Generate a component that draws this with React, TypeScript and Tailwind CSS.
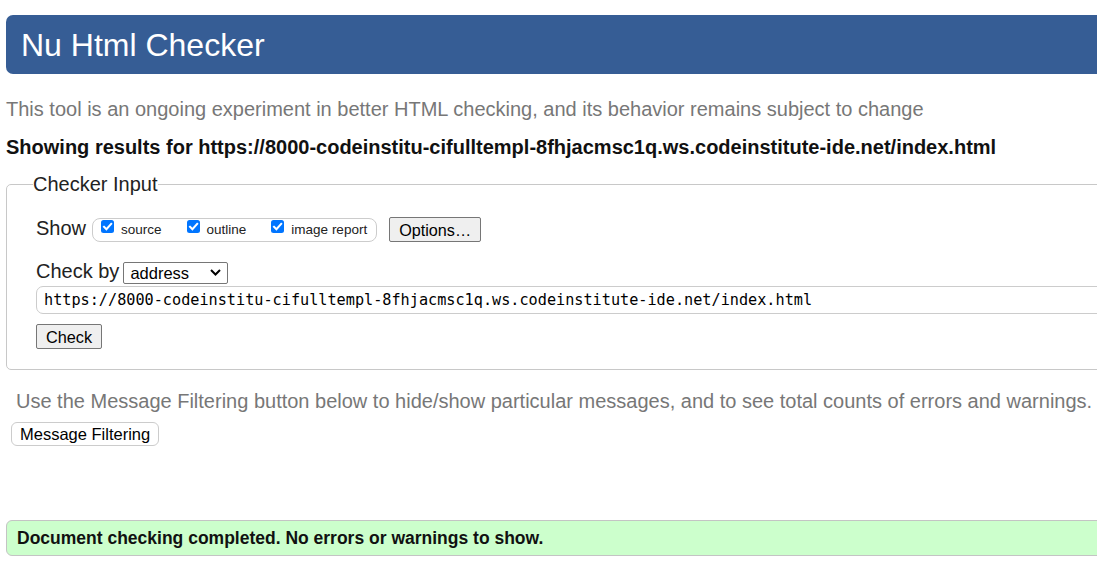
import React from "react";

function Check() {
  return (
    <svg width="13" height="13" viewBox="0 0 13 13" className="shrink-0 mb-[7px]">
      <rect x="0" y="0" width="13" height="13" rx="2.5" fill="#0075ff" />
      <path d="M3 6.8 L5.4 9.2 L10.2 3.8" stroke="#fff" strokeWidth="2" fill="none" strokeLinecap="square" />
    </svg>
  );
}

function Item({ label, last }: { label: string; last?: boolean }) {
  return (
    <span className={"flex items-center " + (last ? "" : "mr-[25px]")}>
      <Check />
      <span className="ml-[7px] text-[13.5px] leading-[15px] text-[#222]">{label}</span>
    </span>
  );
}

export default function App() {
  return (
    <div
      className="w-[1097px] h-[563px] overflow-hidden bg-white text-[#222]"
      style={{ fontFamily: '"Liberation Sans", Arial, sans-serif' }}
    >
      <div className="w-[1160px] pl-[6px]">
        <div className="mt-[15px] h-[59px] rounded-[7px] bg-[#365d95] pl-[15px] pt-[2px] flex items-center">
          <h1 className="text-[32px] leading-[37px] text-white font-normal">Nu Html Checker</h1>
        </div>

        <p className="mt-[24px] text-[20px] leading-[23px] text-[#777]">
          This tool is an ongoing experiment in better HTML checking, and its behavior remains subject to change
        </p>

        <p className="mt-[15px] text-[20px] leading-[23px] font-bold text-[#111]">
          Showing results for https://8000-codeinstitu-cifulltempl-8fhjacmsc1q.ws.codeinstitute-ide.net/index.html
        </p>

        <fieldset className="mt-[14px] border border-[#c8c8c8] rounded-[5px] pl-[29px] pt-[21px] pb-[20px]">
          <legend className="ml-[-3px] text-[20px] leading-[23px] text-[#222]">Checker Input</legend>

          <div className="flex items-center h-[25px]">
            <span className="text-[20px] leading-[23px] mb-[3px]">Show</span>
            <div className="ml-[6px] h-[24px] flex items-center rounded-[8px] border border-[#cccccc] pl-[8px] pr-[9px]">
              <Item label="source" />
              <Item label="outline" />
              <Item label="image report" last />
            </div>
            <div className="ml-[12px] h-[25px] flex items-center rounded-[2px] border border-[#767676] bg-[#efefef] px-[9px] text-[16.2px] leading-[18px] text-black">
              Options…
            </div>
          </div>

          <div className="mt-[19px] flex items-center h-[23px]">
            <span className="text-[20px] leading-[23px] mb-[3px]">Check by</span>
            <div className="ml-[4px] w-[105px] h-[22px] flex items-center justify-between rounded-[2px] border border-[#767676] pl-[6px] pr-[6px] text-[16.5px] leading-[18px] text-black">
              <span>address</span>
              <svg width="11" height="7" viewBox="0 0 11 7">
                <path d="M1 1 L5.5 5.5 L10 1" stroke="#000" strokeWidth="2" fill="none" />
              </svg>
            </div>
          </div>

          <div className="mt-[2px] h-[28px] flex items-center rounded-[7px] border border-[#cccccc] pl-[7px]">
            <span
              className="text-[15.2px] leading-[17px] text-black"
              style={{ fontFamily: '"DejaVu Sans Mono", "Liberation Mono", monospace' }}
            >
              https://8000-codeinstitu-cifulltempl-8fhjacmsc1q.ws.codeinstitute-ide.net/index.html
            </span>
          </div>

          <div className="mt-[10px] flex">
            <div className="h-[25px] flex items-center rounded-[2px] border border-[#767676] bg-[#efefef] px-[9px] text-[16.3px] leading-[18px] text-black">
              Check
            </div>
          </div>
        </fieldset>

        <p className="mt-[20px] ml-[10px] text-[20px] leading-[23px] text-[#777]">
          Use the Message Filtering button below to hide/show particular messages, and to see total counts of errors and warnings.
        </p>

        <div className="mt-[9px] ml-[5px] flex">
          <div className="h-[24px] flex items-center rounded-[6px] border border-[#cccccc] bg-white px-[8px] text-[16.5px] leading-[18px] text-black">
            Message Filtering
          </div>
        </div>

        <div className="mt-[74px] h-[36px] flex items-center rounded-[6px] border border-[#c4c4c4] bg-[#ccffcc] pl-[10px]">
          <span className="text-[17.5px] leading-[20px] font-bold text-[#111]">
            Document checking completed. No errors or warnings to show.
          </span>
        </div>
      </div>
    </div>
  );
}
